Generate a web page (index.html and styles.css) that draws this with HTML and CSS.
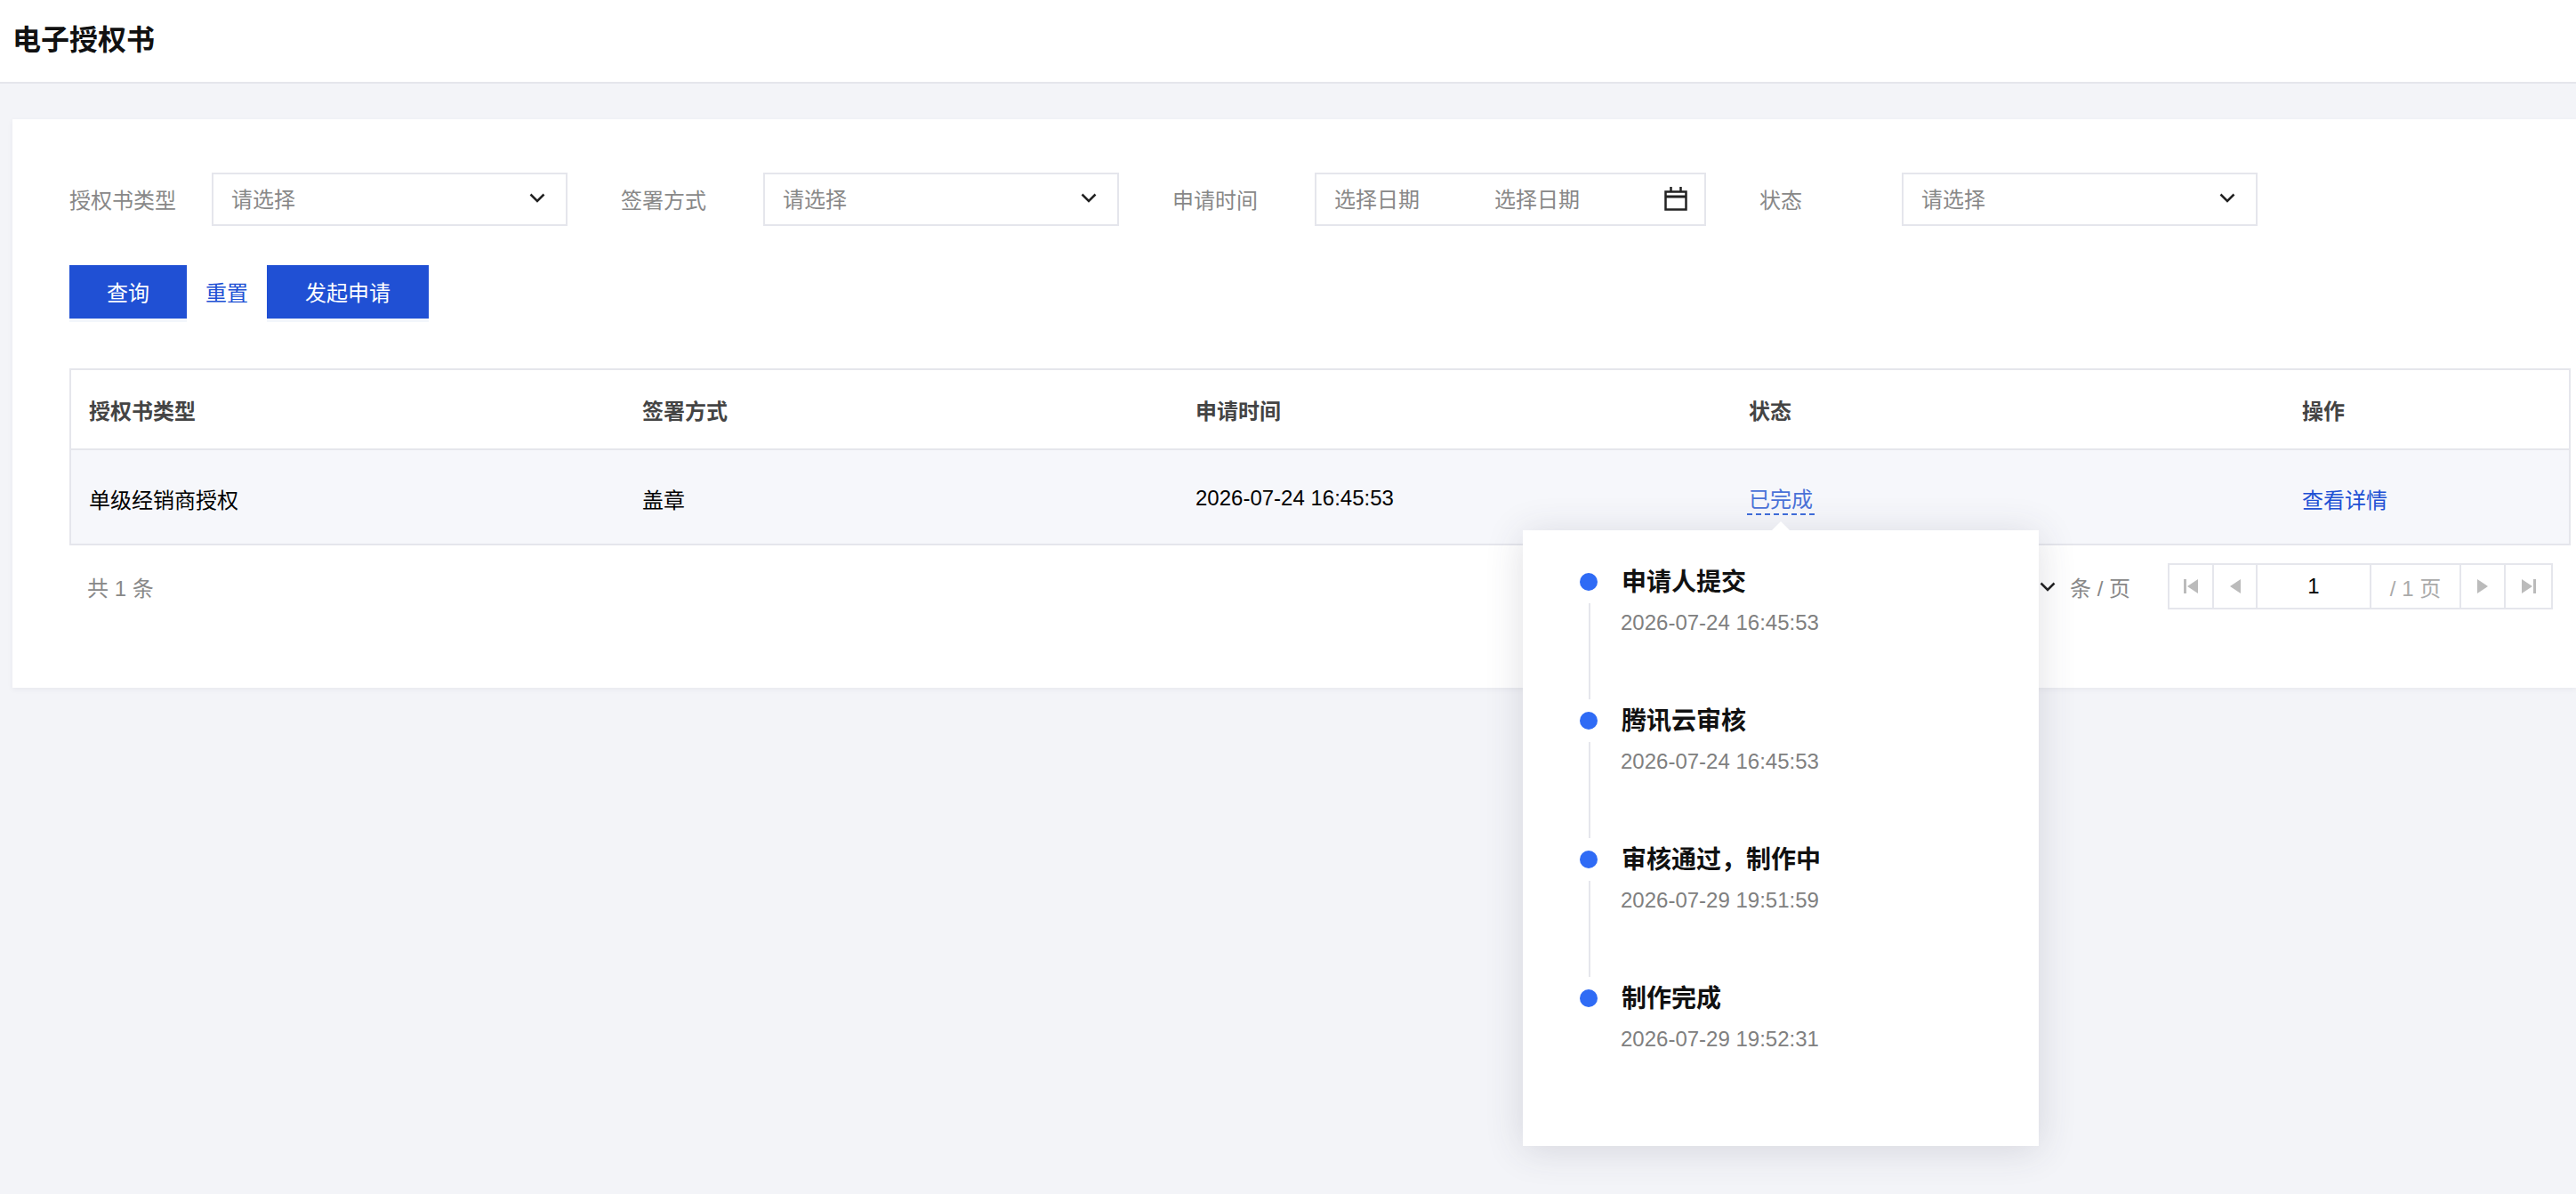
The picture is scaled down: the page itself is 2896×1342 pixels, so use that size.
FILE: index.html
```html
<!DOCTYPE html>
<html lang="zh-CN">
<head>
  <meta charset="UTF-8">
  <title>电子授权书</title>
  <link rel="stylesheet" href="styles.css">
</head>
<body>

  <header class="top-bar">
    <h1>电子授权书</h1>
  </header>

  <main class="content">
    <section class="card">

      <div class="filters">
        <label class="filter-label">授权书类型</label>
        <div class="field select">
          <span>请选择</span>
          <svg class="chevron" viewBox="0 0 18 11"><path d="M1.5 1.5 9 9l7.500-7.500"/></svg>
        </div>
        <label class="filter-label">签署方式</label>
        <div class="field select">
          <span>请选择</span>
          <svg class="chevron" viewBox="0 0 18 11"><path d="M1.5 1.5 9 9l7.500-7.500"/></svg>
        </div>
        <label class="filter-label">申请时间</label>
        <div class="field date">
          <span class="date-text">选择日期</span>
          <span class="date-text">选择日期</span>
          <svg class="calendar" viewBox="0 0 26 28">
            <path d="M1.500 6.500h23v20h-23z"/>
            <path d="M1.500 12h23" stroke-width="3"/>
            <path d="M7.500 1v6M18.500 1v6"/>
          </svg>
        </div>
        <label class="filter-label">状态</label>
        <div class="field select">
          <span>请选择</span>
          <svg class="chevron" viewBox="0 0 18 11"><path d="M1.5 1.5 9 9l7.500-7.500"/></svg>
        </div>
      </div>

      <div class="actions">
        <button class="btn btn-query">查询</button>
        <a class="link reset">重置</a>
        <button class="btn btn-apply">发起申请</button>
      </div>

      <table class="records">
        <thead>
          <tr>
            <th>授权书类型</th>
            <th>签署方式</th>
            <th>申请时间</th>
            <th>状态</th>
            <th>操作</th>
          </tr>
        </thead>
        <tbody>
          <tr>
            <td>单级经销商授权</td>
            <td>盖章</td>
            <td>2026-07-24 16:45:53</td>
            <td><span class="status">已完成</span></td>
            <td><a class="link">查看详情</a></td>
          </tr>
        </tbody>
      </table>

      <div class="table-foot">
        <span class="total">共 1 条</span>
        <div class="pager-wrap">
          <svg class="chevron page-size" viewBox="0 0 18 11"><path d="M1.5 1.5 9 9l7.500-7.500"/></svg>
          <span class="per-page">条 / 页</span>
          <div class="pager">
            <span class="page-btn first">
              <svg viewBox="0 0 16 16"><path d="M0 0h3v16H0zM16 0v16L4 8z"/></svg>
            </span>
            <span class="page-btn prev">
              <svg viewBox="0 0 16 16"><path d="M14 0v16L2 8z"/></svg>
            </span>
            <span class="page-num">1</span>
            <span class="page-count">/ 1 页</span>
            <span class="page-btn next">
              <svg viewBox="0 0 16 16"><path d="M2 0v16l12-8z"/></svg>
            </span>
            <span class="page-btn last">
              <svg viewBox="0 0 16 16"><path d="M0 0v16l12-8zM13 0h3v16h-3z"/></svg>
            </span>
          </div>
        </div>
      </div>

    </section>
  </main>

  <div class="status-popover">
    <ol class="timeline">
      <li class="step">
        <div class="rail"><i class="dot"></i><i class="line"></i></div>
        <div class="step-body">
          <div class="step-title">申请人提交</div>
          <div class="step-time">2026-07-24 16:45:53</div>
        </div>
      </li>
      <li class="step">
        <div class="rail"><i class="dot"></i><i class="line"></i></div>
        <div class="step-body">
          <div class="step-title">腾讯云审核</div>
          <div class="step-time">2026-07-24 16:45:53</div>
        </div>
      </li>
      <li class="step">
        <div class="rail"><i class="dot"></i><i class="line"></i></div>
        <div class="step-body">
          <div class="step-title">审核通过，制作中</div>
          <div class="step-time">2026-07-29 19:51:59</div>
        </div>
      </li>
      <li class="step">
        <div class="rail"><i class="dot"></i></div>
        <div class="step-body">
          <div class="step-title">制作完成</div>
          <div class="step-time">2026-07-29 19:52:31</div>
        </div>
      </li>
    </ol>
  </div>

</body>
</html>
```

FILE: styles.css
```css
* {
  box-sizing: border-box;
}

html,
body {
  height: 100%;
}

body {
  margin: 0;
  overflow: hidden;
  background: #f3f4f8;
  color: #000;
  font-family: "Liberation Sans", "Noto Sans CJK SC", sans-serif;
  font-size: 24px;
}

.top-bar {
  display: flex;
  align-items: center;
  height: 94px;
  padding-left: 14px;
  padding-bottom: 8px;
  background: #fff;
  border-bottom: 2px solid #e5e6ec;
}

.top-bar h1 {
  margin: 0;
  font-size: 32px;
  font-weight: 700;
  color: #111;
}

.content {
  padding: 40px 0 0 14px;
}

.card {
  padding: 60px 6px 88px 64px;
  background: #fff;
  box-shadow: 0 2px 6px rgba(54, 58, 80, 0.06);
}

.filters {
  display: flex;
  align-items: center;
  height: 60px;
}

.filter-label {
  width: 160px;
  padding-bottom: 2px;
  color: #888;
}

.field {
  display: flex;
  align-items: center;
  height: 60px;
  margin-right: 60px;
  padding: 0 23px 3px 20px;
  border: 2px solid #e5e6ec;
  color: #888;
}

.select {
  justify-content: space-between;
  width: 400px;
}

.date {
  width: 440px;
  padding-right: 18px;
}

.date-text {
  flex: none;
  width: 180px;
}

.chevron {
  flex: none;
  width: 18px;
  height: 11px;
  fill: none;
  stroke: #222;
  stroke-width: 2.5;
}

.calendar {
  flex: none;
  width: 26px;
  height: 28px;
  margin-left: 11px;
  fill: none;
  stroke: #222;
  stroke-width: 2.5;
}

.actions {
  display: flex;
  align-items: center;
  margin-top: 44px;
}

.btn {
  height: 60px;
  padding: 0 0 2px;
  border: 0;
  background: #2050d4;
  color: #fff;
  font: inherit;
  box-shadow: 0 4px 0 #f3f6fb;
}

.btn-query {
  width: 132px;
}

.btn-apply {
  width: 182px;
}

.link {
  color: #2050d4;
}

.reset {
  margin: 0 21px 2px;
}

.records {
  width: 2812px;
  margin-top: 56px;
  border-collapse: separate;
  border-spacing: 0;
  border: 2px solid #e5e6ec;
  table-layout: fixed;
}

.records th,
.records td {
  padding: 0 20px;
  text-align: left;
}

.records th:nth-child(-n+4),
.records td:nth-child(-n+4) {
  width: 622px;
}

.records th {
  height: 90px;
  border-bottom: 2px solid #e5e6ec;
  color: #444;
  font-weight: 700;
}

.records td {
  height: 105px;
  padding-top: 3px;
  background: #f6f7fb;
}

.status {
  display: inline-block;
  padding: 0 2px;
  margin-left: -2px;
  border-bottom: 2px dashed #3f6ddc;
  color: #4a72d8;
  line-height: 30px;
  vertical-align: -6px;
}

.table-foot {
  display: flex;
  justify-content: space-between;
  align-items: center;
  height: 52px;
  margin-top: 20px;
  padding: 0 20px;
}

.total,
.per-page {
  color: #888;
}

.pager-wrap {
  display: flex;
  align-items: center;
}

.page-size {
  margin-right: 16px;
}

.per-page {
  margin-right: 42px;
}

.pager {
  display: flex;
  height: 52px;
  border: 2px solid #e5e6ec;
}

.pager > span {
  display: flex;
  align-items: center;
  justify-content: center;
  border-right: 2px solid #e5e6ec;
}

.pager > span:last-child {
  border-right: 0;
}

.page-btn {
  width: 51px;
}

.page-btn.first {
  width: 50px;
}

.page-btn.prev {
  width: 49px;
}

.page-btn.next {
  width: 50px;
}

.page-btn svg {
  width: 16px;
  height: 16px;
  fill: #bbb;
}

.page-num {
  width: 128px;
}

.page-count {
  width: 101px;
  color: #aaa;
}

/* sits over the table, opened from the status cell */
.status-popover {
  position: absolute;
  left: 1712px;
  top: 596px;
  width: 580px;
  height: 692px;
  padding: 48px 0 0 64px;
  background: #fff;
  box-shadow: 0 4px 40px rgba(54, 58, 80, 0.16);
}

.status-popover::before {
  content: "";
  position: absolute;
  left: 280px;
  top: -10px;
  border-left: 10px solid transparent;
  border-right: 10px solid transparent;
  border-bottom: 10px solid #fff;
}

.timeline {
  margin: 0;
  padding: 0;
  list-style: none;
}

.step {
  display: flex;
  height: 156px;
}

.rail {
  display: flex;
  flex-direction: column;
  align-items: center;
  width: 20px;
  margin-right: 27px;
}

.dot {
  display: block;
  flex: none;
  width: 20px;
  height: 20px;
  border-radius: 50%;
  background: #2f6bf5;
}

.line {
  display: block;
  width: 2px;
  height: 108px;
  margin-top: 14px;
  margin-left: 2px;
  background: #e5e6ec;
}

.step-body {
  margin-top: -9px;
}

.step-title {
  font-size: 28px;
  font-weight: 700;
  line-height: 40px;
  color: #111;
}

.step-time {
  margin-top: 11px;
  margin-left: -1px;
  color: #808080;
  line-height: 28px;
}
```
